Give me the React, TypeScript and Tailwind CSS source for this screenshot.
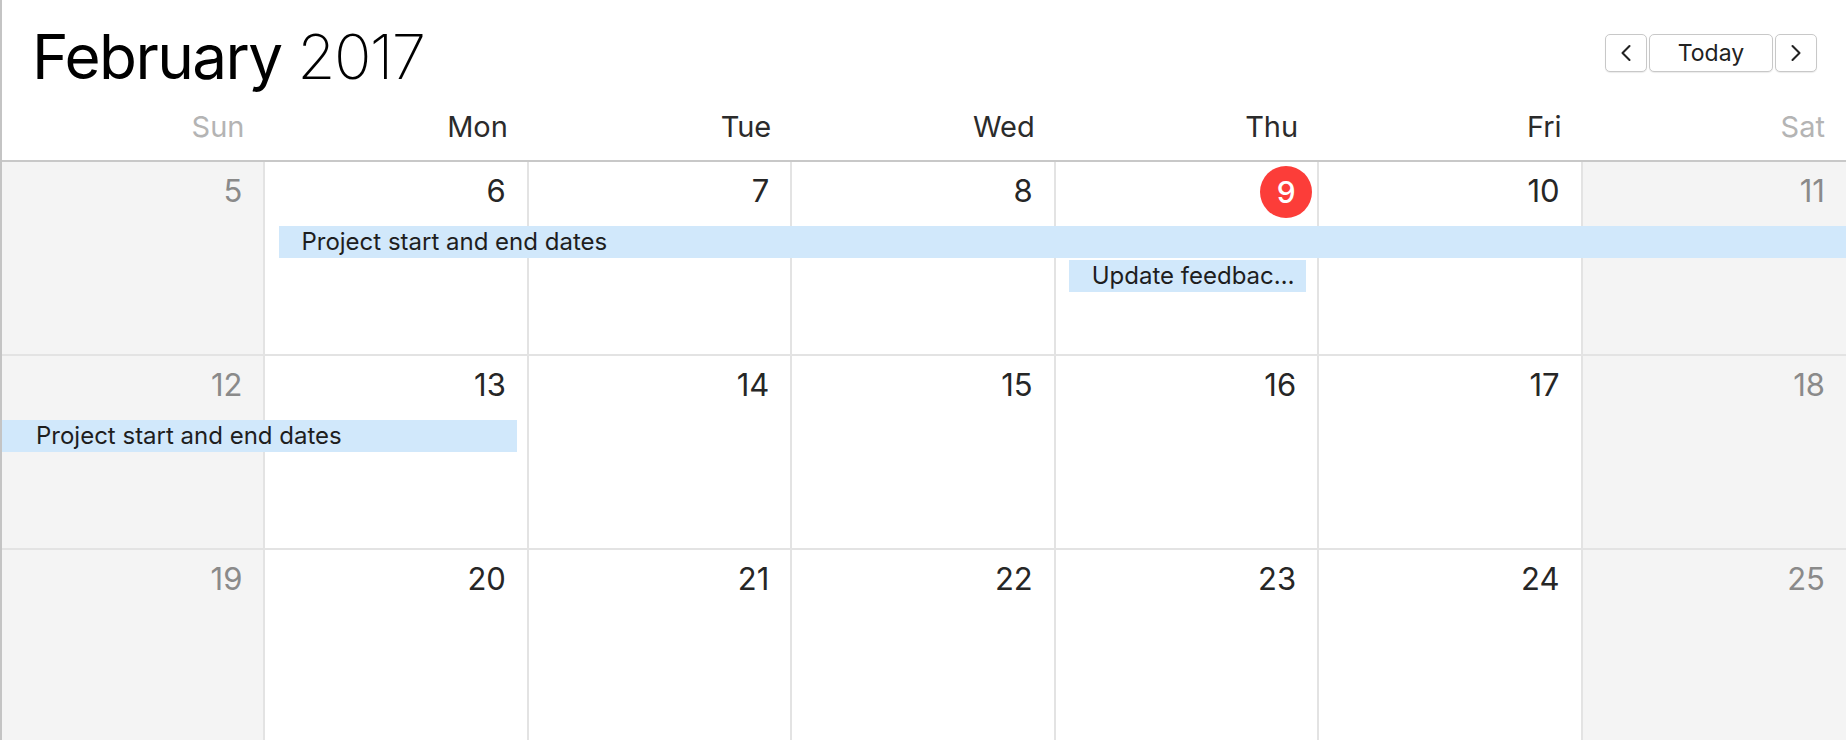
import { ChevronLeft, ChevronRight } from 'lucide-react'

const days = ['Sun', 'Mon', 'Tue', 'Wed', 'Thu', 'Fri', 'Sat']

const weeks = [
  [5, 6, 7, 8, 9, 10, 11],
  [12, 13, 14, 15, 16, 17, 18],
  [19, 20, 21, 22, 23, 24, 25],
]

const TODAY = 9

function DayCell({ date, col }: { date: number; col: number }) {
  const weekend = col === 0 || col === 6
  const isToday = date === TODAY
  return (
    <div
      className={`row-start-1 row-end-5 flex justify-end ${col < 6 ? 'border-r-2 border-[#e3e3e3]' : ''} ${
        weekend ? 'bg-[#f4f4f4]' : 'bg-white'
      } ${isToday ? 'pt-[4px] pr-[5px]' : 'pt-[13px] pr-[21px]'}`}
      style={{ gridColumnStart: col + 1 }}
    >
      {isToday ? (
        <div className="w-[52px] h-[52px] shrink-0 rounded-full bg-[#fc3d39] flex items-center justify-center text-white text-[30px] leading-none font-medium">
          {date}
        </div>
      ) : (
        <span className={`text-[31px] leading-[32px] ${weekend ? 'text-[#8a8a8a]' : 'text-[#262626]'}`}>{date}</span>
      )}
    </div>
  )
}

export default function App() {
  return (
    <div
      className="w-[1846px] h-[740px] overflow-hidden bg-white border-l-2 border-[#c4c4c4]"
      style={{ fontFamily: 'Inter, "Noto Sans", sans-serif' }}
    >
      <div className="flex items-start justify-between pt-[25px] pl-[30px] pr-[29px]">
        <h1 className="text-[62px] leading-[64px] text-black tracking-[-1.6px]">
          <span className="font-normal">February</span> <span className="font-extralight">2017</span>
        </h1>
        <div className="flex gap-[2px] mt-[9px]">
          <button className="w-[42px] h-[38px] flex items-center justify-center bg-white border border-[#c8c8c8] rounded-[5px] shadow-[0_1px_1px_rgba(0,0,0,0.08)] text-[#222]">
            <ChevronLeft size={28} strokeWidth={1.8} />
          </button>
          <button className="w-[124px] h-[38px] bg-white border border-[#c8c8c8] rounded-[5px] shadow-[0_1px_1px_rgba(0,0,0,0.08)] text-[23px] text-[#222]">
            Today
          </button>
          <button className="w-[42px] h-[38px] flex items-center justify-center bg-white border border-[#c8c8c8] rounded-[5px] shadow-[0_1px_1px_rgba(0,0,0,0.08)] text-[#222]">
            <ChevronRight size={28} strokeWidth={1.8} />
          </button>
        </div>
      </div>

      <div className="grid grid-cols-7 pt-[22px] pb-[17px] border-b-2 border-[#c8c8c8]">
        {days.map((d, i) => (
          <div
            key={d}
            className={`text-right pr-[21px] text-[29px] leading-[32px] ${
              i === 0 || i === 6 ? 'text-[#b4b4b4]' : 'text-[#2b2b2b]'
            }`}
          >
            {d}
          </div>
        ))}
      </div>

      {weeks.map((week, w) => (
        <div
          key={w}
          className={`grid grid-cols-7 grid-rows-[64px_34px_32px_1fr] h-[192px] ${w > 0 ? 'border-t-2 border-[#e3e3e3] box-content' : ''}`}
        >
          {week.map((date, i) => (
            <DayCell key={date} date={date} col={i} />
          ))}

          {w === 0 && (
            <>
              <div className="row-start-2 col-start-2 col-end-8 ml-[14px] h-[32px] bg-[#d1e8fb] pl-[22px] flex items-center text-[24px] text-[#1e1e1e]">
                Project start and end dates
              </div>
              <div className="row-start-3 col-start-5 col-end-6 mx-[13px] h-[32px] bg-[#d1e8fb] pl-[23px] flex items-center text-[24px] text-[#1e1e1e] whitespace-nowrap overflow-hidden">
                Update feedbac…
              </div>
            </>
          )}
          {w === 1 && (
            <div className="row-start-2 col-start-1 col-end-3 mr-[12px] h-[32px] bg-[#d1e8fb] pl-[34px] flex items-center text-[24px] text-[#1e1e1e]">
              Project start and end dates
            </div>
          )}
        </div>
      ))}
    </div>
  )
}
